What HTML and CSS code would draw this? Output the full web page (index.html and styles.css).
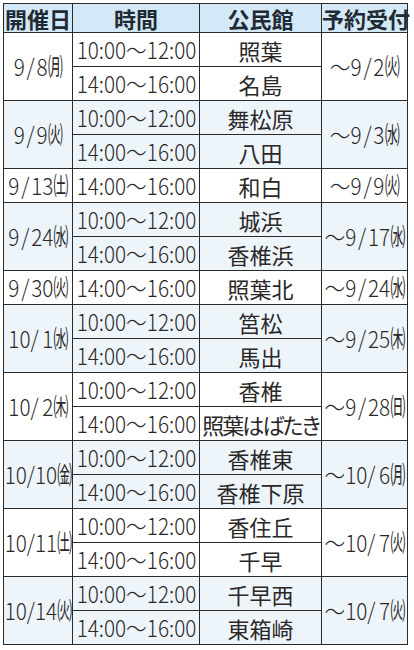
FILE: index.html
```html
<!DOCTYPE html>
<html lang="ja">
<head>
<meta charset="utf-8">
<title>日程表</title>
<link rel="stylesheet" href="styles.css">
</head>
<body>
<table class="sched">
  <colgroup><col class="c1"><col class="c2"><col class="c3"><col class="c4"></colgroup>
  <thead>
    <tr><th>開催日</th><th>時間</th><th>公民館</th><th>予約受付</th></tr>
  </thead>
  <tbody>
    <tr><td rowspan="2"><span class="sq">9<span class="sl">/</span>8<span class="w">㈪</span></span></td><td><span class="sq">10:00〜12:00</span></td><td>照葉</td><td rowspan="2"><span class="sq">〜9<span class="sl">/</span>2<span class="w">㈫</span></span></td></tr>
    <tr><td><span class="sq">14:00〜16:00</span></td><td>名島</td></tr>
  </tbody>
  <tbody class="alt">
    <tr><td rowspan="2"><span class="sq">9<span class="sl">/</span>9<span class="w">㈫</span></span></td><td><span class="sq">10:00〜12:00</span></td><td>舞松原</td><td rowspan="2"><span class="sq">〜9<span class="sl">/</span>3<span class="w">㈬</span></span></td></tr>
    <tr><td><span class="sq">14:00〜16:00</span></td><td>八田</td></tr>
  </tbody>
  <tbody>
    <tr><td><span class="sq">9<span class="sl">/</span>13<span class="w">㈯</span></span></td><td><span class="sq">14:00〜16:00</span></td><td>和白</td><td><span class="sq">〜9<span class="sl">/</span>9<span class="w">㈫</span></span></td></tr>
  </tbody>
  <tbody class="alt">
    <tr><td rowspan="2"><span class="sq">9<span class="sl">/</span>24<span class="w">㈬</span></span></td><td><span class="sq">10:00〜12:00</span></td><td>城浜</td><td rowspan="2"><span class="sq">〜9<span class="sl">/</span>17<span class="w">㈬</span></span></td></tr>
    <tr><td><span class="sq">14:00〜16:00</span></td><td>香椎浜</td></tr>
  </tbody>
  <tbody>
    <tr><td><span class="sq">9<span class="sl">/</span>30<span class="w">㈫</span></span></td><td><span class="sq">14:00〜16:00</span></td><td>照葉北</td><td><span class="sq">〜9<span class="sl">/</span>24<span class="w">㈬</span></span></td></tr>
  </tbody>
  <tbody class="alt">
    <tr><td rowspan="2"><span class="sq">10/<span class="sp">1</span><span class="w">㈬</span></span></td><td><span class="sq">10:00〜12:00</span></td><td>筥松</td><td rowspan="2"><span class="sq">〜9<span class="sl">/</span>25<span class="w">㈭</span></span></td></tr>
    <tr><td><span class="sq">14:00〜16:00</span></td><td>馬出</td></tr>
  </tbody>
  <tbody>
    <tr><td rowspan="2"><span class="sq">10/<span class="sp">2</span><span class="w">㈭</span></span></td><td><span class="sq">10:00〜12:00</span></td><td>香椎</td><td rowspan="2"><span class="sq">〜9<span class="sl">/</span>28<span class="w">㈰</span></span></td></tr>
    <tr><td><span class="sq">14:00〜16:00</span></td><td><span class="nm">照葉はばたき</span></td></tr>
  </tbody>
  <tbody class="alt">
    <tr><td rowspan="2"><span class="sq">10/10<span class="w">㈮</span></span></td><td><span class="sq">10:00〜12:00</span></td><td>香椎東</td><td rowspan="2"><span class="sq">〜10/<span class="sp">6</span><span class="w">㈪</span></span></td></tr>
    <tr><td><span class="sq">14:00〜16:00</span></td><td>香椎下原</td></tr>
  </tbody>
  <tbody>
    <tr><td rowspan="2"><span class="sq">10/11<span class="w">㈯</span></span></td><td><span class="sq">10:00〜12:00</span></td><td>香住丘</td><td rowspan="2"><span class="sq">〜10/<span class="sp">7</span><span class="w">㈫</span></span></td></tr>
    <tr><td><span class="sq">14:00〜16:00</span></td><td>千早</td></tr>
  </tbody>
  <tbody class="alt">
    <tr><td rowspan="2"><span class="sq">10/14<span class="w">㈫</span></span></td><td><span class="sq">10:00〜12:00</span></td><td>千早西</td><td rowspan="2"><span class="sq">〜10/<span class="sp">7</span><span class="w">㈫</span></span></td></tr>
    <tr><td><span class="sq">14:00〜16:00</span></td><td>東箱崎</td></tr>
  </tbody>
</table>
</body>
</html>
```
FILE: styles.css
```css
body {
  margin: 0;
  background: #ffffff;
  font-family: "Noto Sans CJK JP", "Noto Sans", sans-serif;
  color: #2b2727;
}

.sched {
  border-collapse: collapse;
  table-layout: fixed;
  width: 405px;
  margin: 3px 0 0 3px;
}

.c1 { width: 69px; }
.c2 { width: 127px; }
.c3 { width: 122px; }
.c4 { width: 86px; }

.sched th,
.sched td {
  border: 1px solid #2a2a2a;
  padding: 0;
  text-align: center;
  vertical-align: middle;
  white-space: nowrap;
  line-height: 1;
}

.sched th {
  height: 28px;
  background: #d4e9f7;
  font-size: 22px;
  font-weight: 700;
  color: #1f2a33;
}

.sched td {
  height: 33px;
  font-size: 22px;
  font-weight: 400;
}

.alt td {
  background: #edf5fb;
}

.sq {
  display: inline-block;
  margin: 0 -14px;
  font-size: 23px;
  font-weight: 300;
  transform: scaleX(0.9);
}

.sl {
  margin: 0 2px;
}

.sp {
  margin-left: 4px;
}

.w {
  display: inline-block;
  font-size: 25px;
  font-weight: 400;
  line-height: 20px;
  margin: 0 -5px 0 -4px;
  transform: scaleX(0.66);
}

.nm {
  display: inline-block;
  margin: 0 -10px;
  font-feature-settings: "palt";
  letter-spacing: -2px;
}
```
